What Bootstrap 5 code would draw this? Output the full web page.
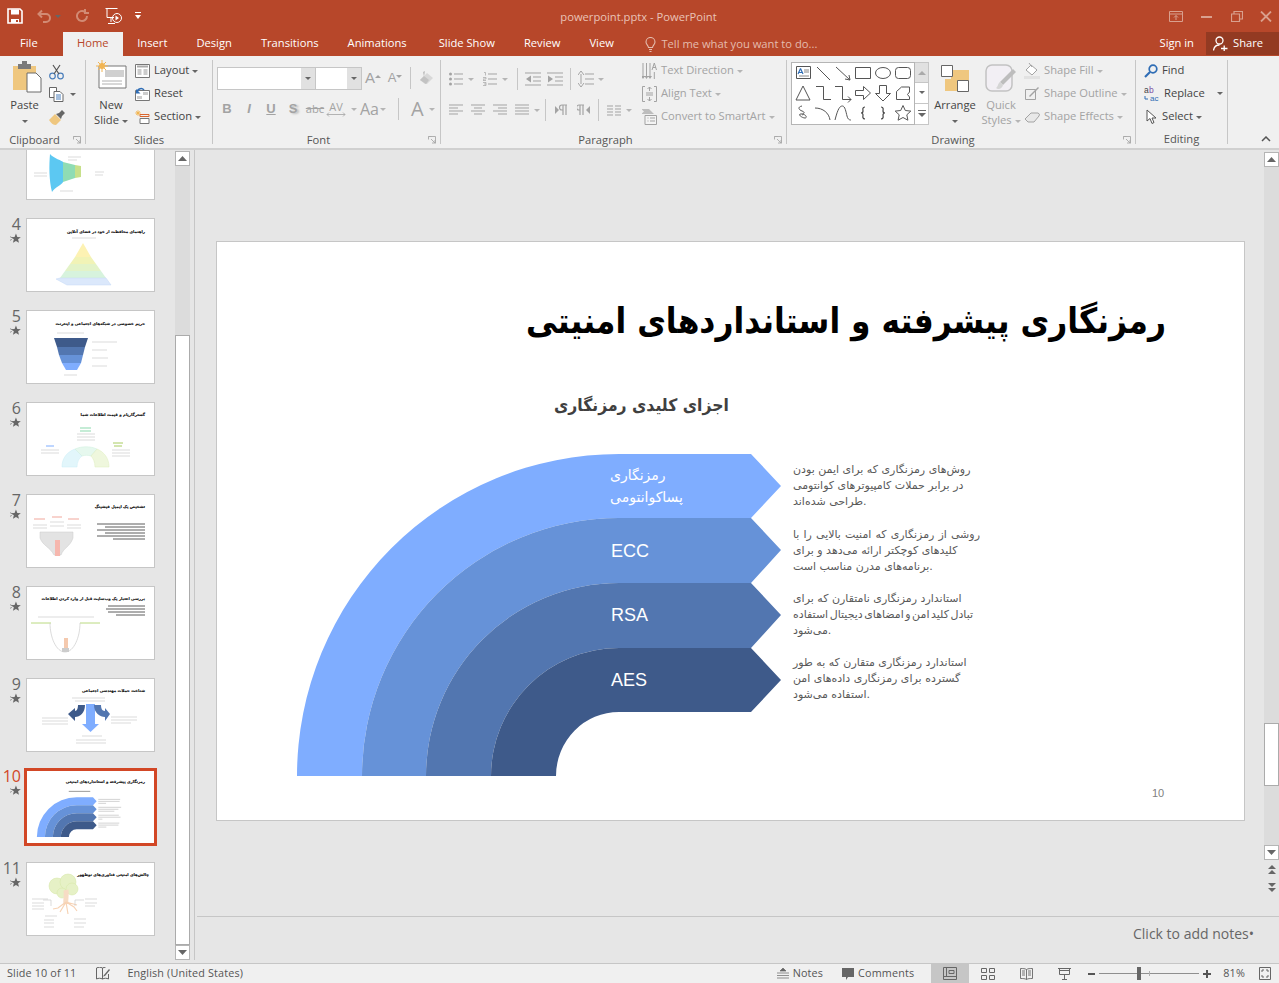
<!DOCTYPE html>
<html lang="en">
<head>
  <meta charset="UTF-8" />
  <title>powerpoint.pptx - PowerPoint</title>
  <link href="https://cdn.jsdelivr.net/npm/bootstrap@5.3.0/dist/css/bootstrap.min.css" rel="stylesheet"/>
  <style>
    html, body { height: 100%; overflow: hidden; }
    body { background: #e6e6e6; font-family: "Open Sans", "Liberation Sans", sans-serif; font-size: 11.2px; color: #444; }
    svg { display: block; flex: none; }

    /* title bar + tabs */
    .app-top { background: #b7472a; color: #fff; flex: none; }
    .title-row { height: 32px; position: relative; }
    .qat-save { margin: 0 14px 0 7px; }
    .qat-gap { margin-right: 7px; }
    .qat-more { margin-left: 12px; }
    .doc-name { color: #eac3b7; font-size: 11.2px; width: 100%; text-align: center; position: absolute; top: 9px; left: -1px; pointer-events: none; }
    .win-btns { margin-left: auto; gap: 17px; padding-right: 7px; }
    .tab-row { height: 24px; }
    .rb-tab { padding: 0 14.5px; line-height: 22px; height: 24px; white-space: nowrap; }
    .rb-tab-file { padding: 0 25px 0 20px; }
    .rb-tab-on { background: #f0f0f0; color: #b7472a; width: 60px; text-align: center; padding: 0; }
    .rb-tab-wide { padding-right: 17.5px; }
    .tell-me { color: #e5bcae; padding-left: 17px; gap: 5px; }
    .sign-in { margin-left: auto; padding-right: 10px; }
    .share-box { background: #933a22; width: 73px; height: 23px; gap: 5px; padding-left: 7px; }

    /* ribbon */
    .ribbon { background: #f0f0f0; height: 94px; border-bottom: 2px solid #d0d0d0; padding-top: 4px; flex: none; }
    .rb-group { height: 84px; border-right: 1px solid #c6c6c6; flex: none; position: relative; }
    .rb-body { height: 74px; }
    .rb-body > * { flex: none; }
    .rb-label { line-height: 12px; height: 12px; text-align: center; color: #555; font-size: 11.2px; }
    .lbl-pad { padding-right: 16px; }
    .g-clip { width: 86px; } .g-slides { width: 127px; } .g-font { width: 228px; }
    .g-para { width: 346px; } .g-draw { width: 349px; } .g-edit { width: 92px; }
    .launch { position: absolute; right: 4px; bottom: 0; }
    .big-ic { height: 37px; }
    .big-tx { line-height: 15px; text-align: center; white-space: nowrap; }
    .sm-row { height: 23px; white-space: nowrap; gap: 4px; }
    .sm-row:first-child { margin-top: -1px; }
    .tri { display: inline-block; border: 3px solid transparent; border-top: 3px solid #666; border-bottom: 0; vertical-align: middle; margin-left: 3px; }
    .dim { color: #a3a3a3; }
    .dim .tri { border-top-color: #b5b5b5; }
    .clip-big { width: 35px; margin: 0 7px 0 7px; }
    .clip-ic { margin-left: 4px; }
    .clip-sm { height: 23px; gap: 6px; }
    .slide-big { width: 42px; margin: 0 3px 0 4px; }
    .rb-sep { width: 1px; height: 22px; background: #c6c6c6; margin: 0 4px; flex: none; }
    .tb { width: 22px; height: 22px; flex: none; }
    .tb-c { width: 34px; height: 22px; flex: none; padding-right: 1px; gap: 1px; }
    .font-top { padding: 7px 0 0 4px; height: 38px; gap: 0; }
    .font-name { width: 99px; height: 23px; border: 1px solid #c6c6c6; display: flex; }
    .font-size { width: 46px; height: 23px; border: 1px solid #c6c6c6; border-left: 0; display: flex; }
    .fld { flex: 1; background: #fff; }
    .fld-dd { width: 14px; background: #e1e1e1; }
    .font-bot { padding-left: 3px; }
    .btn-tx { font-family: "Liberation Sans", sans-serif; font-weight: 700; font-size: 13px; color: #a3a3a3; }
    .btn-grow { font-size: 15px; font-weight: 400; }
    .btn-shadow { text-shadow: 2px 1px 2px #bbb; }
    .av-stack { line-height: 10px; font-size: 11px; text-align: center; }
    .para-left { width: 201px; padding: 4px 0 0 4px; }
    .para-row { height: 30px; }
    .para-row2 { height: 24px; margin-top: 4px; }
    .draw-box { width: 124px; height: 63px; background: #fff; border: 1px solid #b5b5b5; margin: 2px 0 0 4px; display: grid; grid-template-columns: repeat(6, 20px); grid-auto-rows: 20px; padding: 0 1px; }
    .draw-scroll { width: 14px; height: 63px; margin-top: 2px; border: 1px solid #c6c6c6; border-left: 0; background: #fff; }
    .draw-scroll div { height: 20.3px; border-bottom: 1px solid #c6c6c6; }
    .draw-scroll div:first-child { background: #e1e1e1; }
    .draw-scroll div:last-child { border-bottom: 0; }
    .arr-big { width: 46px; margin-left: 3px; }
    .qs-big { width: 46px; }
    .edit-col { padding-left: 8px; }
    .collapse-up { margin: 76px 0 0 auto; padding-right: 8px; }

    /* panes */
    .work { height: 813px; flex: none; }
    .thumb-pane { width: 195px; border-right: 1px solid #c6c6c6; height: 810px; overflow: hidden; flex: none; }
    .thumb-list { width: 175px; height: 810px; overflow: hidden; padding-top: 0; }
    .thumb-row { height: 92px; margin: 0; }
    .thumb-list > .thumb-row:first-child { margin-top: -24px; }
    .thumb-meta { width: 26px; padding-right: 5px; text-align: right; font-size: 16px; line-height: 12px; color: #666; flex: none; }
    .thumb-star { margin: 3px 0 0 10px; }
    .thumb-box { width: 129px; height: 74px; background: #fff; border: 1px solid #c6c6c6; flex: none; }
    .thumb-cur .thumb-box { border-color: #d24726; box-shadow: 0 0 0 2px #d24726; }
    .thumb-cur .thumb-meta { color: #d24726; }
    .thumb-tl { font-family: "DejaVu Sans", sans-serif; font-weight: 700; font-size: 3.9px; fill: #111; stroke: #111; stroke-width: .15; text-anchor: end; }
    .thumb-tl-big { font-size: 31.500px; stroke-width: 1.200; }
    .thumb-row:not(.thumb-cur) path[stroke="#ccc"] { stroke-width: .7; }
    .vscroll { width: 15px; background: #dcdcdc; flex: none; }
    .vs-left { height: 809px; margin-top: 1px; }
    .vs-btn { height: 15px; background: #fff; border: 1px solid #b5b5b5; flex: none; }
    .vs-fill { flex: 1; }
    .vs-thumb { background: #fff; border: 1px solid #ababab; flex: none; }
    .vs-thumb-l { height: 610px; }
    .vs-gap-l { height: 169px; }
    .vs-right { height: 708px; margin-top: 2px; }
    .vs-gap-r { height: 556px; }
    .vs-thumb-r { height: 63px; }
    .edit-pane { min-width: 0; }
    .edit-stage { height: 766px; flex: none; }
    .slide-wrap { flex: 1; padding: 91px 0 0 21px; }
    .slide-canvas { width: 1029px; height: 580px; background: #fff; border: 1px solid #c6c6c6; position: relative; }
    .page-nav { width: 15px; gap: 8px; padding-top: 5px; flex: none; }
    .rsb { width: 15px; flex: none; }
    .notes-pane { height: 46px; margin-left: 2px; border-top: 1px solid #c6c6c6; text-align: right; padding: 6px 25px 0 0; font-size: 14px; color: #666; flex: none; }

    /* slide contents, free canvas */
    .sl-art { position: absolute; left: 0; top: 1px; }
    .sl-fa { position: absolute; font-family: "DejaVu Sans", sans-serif; white-space: nowrap; line-height: 1; }
    .sl-title { right: 78px; top: 62px; font-size: 35px; font-weight: 700; color: #000; transform: scaleX(.895); transform-origin: right center; }
    .sl-sub { left: 337px; top: 155px; font-size: 17px; font-weight: 700; color: #404040; transform: scaleX(.92); transform-origin: left center; }
    .sl-band { color: #fff; font-size: 14px; left: 393px; line-height: 22px; }
    .sl-lat { position: absolute; left: 394px; color: #fff; font: 18px "Liberation Sans", sans-serif; line-height: 20px; }
    .sl-note { left: 576px; font-size: 11px; line-height: 16px; color: #595959; }
    .sl-tight { word-spacing: -2px; }
    .sl-loose { word-spacing: .6px; }
    .sl-no { position: absolute; left: 935px; top: 545px; color: #808080; font: 11px "Liberation Sans", sans-serif; }

    /* status bar */
    .status-bar { height: 20px; background: #f0f0f0; border-top: 1px solid #c6c6c6; flex: none; letter-spacing: .15px; font-size: 10.800px; color: #555; white-space: nowrap; }
    .st-left { padding-left: 7px; }
    .st-lang { margin-left: 16px; }
    .st-note-ic { margin-left: 20px; }
    .st-right { margin-left: auto; }
    .st-item { gap: 4px; margin-right: 19px; }
    .st-view { width: 38px; height: 20px; }
    .st-view-on { background: #c6c6c6; margin-left: -2px; }
    .st-view-end { margin-right: 5px; }
    .zoom-bar { width: 100px; height: 1px; background: #8f8f8f; position: relative; margin: 0 4px; }
    .zoom-knob { position: absolute; left: 38px; top: -6px; width: 4px; height: 13px; background: #666; }
    .zoom-tick { position: absolute; left: 50px; top: -2px; width: 1px; height: 5px; background: #b0b0b0; }
    .zoom-pct { margin: 0 14px 0 12px; }
  </style>
</head>
<body class="d-flex flex-column">

  <svg width="0" height="0" class="position-absolute">
    <symbol id="star" viewBox="0 0 12 12"><path d="M6.500 .5l1.500 3.800 3.800.2-3 2.400 1 3.800-3.300-2.100-3.300 2.100 1-3.800-3-2.400 3.800-.2z" fill="#666"/><path d="M0 4l3 1.500M0 8l2-1" stroke="#666" stroke-width=".7"/></symbol>
    <symbol id="launcher" viewBox="0 0 8 8"><path d="M.5 .5h7v7M.5 .5v3M.5 .5h3M3 3l4 4M7 4v3H4" fill="none" stroke="#a8a8a8" stroke-width=".9"/></symbol>
    <g id="art">
      <path fill="#7fadff" d="M80 533A322 322 0 0 1 402 211H534L564 243L534 275H402A257 258 0 0 0 145 533Z"/>
      <path fill="#6692d8" d="M145 533A257 258 0 0 1 402 275H534L564 307L534 340H402A193 193 0 0 0 209 533Z"/>
      <path fill="#5276b0" d="M209 533A193 193 0 0 1 402 340H534L564 372L534 405H402A128 128 0 0 0 274 533Z"/>
      <path fill="#3e5a8a" d="M274 533A128 128 0 0 1 402 405H534L564 437L534 469H402A63 64 0 0 0 339 533Z"/>
    </g>
  </svg>

  <!-- title bar and tabs -->
  <header class="app-top">
    <div class="title-row d-flex align-items-center">
      <svg class="qat-save" width="16" height="16" viewBox="0 0 16 16"><path d="M1 1h12l2 2v12H1z" fill="none" stroke="#fff" stroke-width="1.600"/><path d="M4 1.500h8v5H4zM4 11h8v4H4z" fill="#fff"/><path d="M9 12h2v2H9z" fill="#b7472a"/></svg>
      <svg width="15" height="14" viewBox="0 0 15 14"><path d="M5 1.500L1.500 5 5 8.500M2 5h7a4 4 0 0 1 0 8H6" fill="none" stroke="#d28b74" stroke-width="2"/></svg>
      <span class="tri qat-gap"></span>
      <svg class="ms-2 qat-gap" width="14" height="14" viewBox="0 0 14 14"><path d="M11 7a5 5 0 1 1-2-4M9 0v4H13" fill="none" stroke="#d28b74" stroke-width="2"/></svg>
      <svg class="ms-2" width="18" height="18" viewBox="0 0 18 18"><path d="M.5 1.500h12M2 1.500v9h7M6 11v4M3 16.500h7" fill="none" stroke="#fff"/><circle cx="12" cy="11" r="4.500" fill="none" stroke="#fff"/><path d="M10.500 8.500v5l3.500-2.500z" fill="#fff"/></svg>
      <svg class="qat-more" width="6" height="8" viewBox="0 0 6 8"><path d="M0 0h6v1H0zM0 3h6L3 7z" fill="#fff"/></svg>
      <div class="doc-name">powerpoint.pptx - PowerPoint</div>
      <div class="win-btns d-flex align-items-center">
        <svg width="14" height="11" viewBox="0 0 14 11"><path d="M.5 .5h13v10H.5zM.5 3h13M7 9V4.500M5 6.500l2-2 2 2" fill="none" stroke="#d9a08e"/></svg>
        <svg width="14" height="11" viewBox="0 0 14 11"><path d="M1 6h11" stroke="#d9a08e" stroke-width="2"/></svg>
        <svg width="12" height="11" viewBox="0 0 12 11"><path d="M.5 3h8v7.500h-8zM3 3V.5h8.500V8H8.500" fill="none" stroke="#d9a08e" stroke-width="1.200"/></svg>
        <svg width="12" height="11" viewBox="0 0 12 11"><path d="M1 .5l10 10M11 .5l-10 10" stroke="#d9a08e" stroke-width="1.800"/></svg>
      </div>
    </div>
    <div class="tab-row d-flex">
      <div class="rb-tab rb-tab-file">File</div>
      <div class="rb-tab rb-tab-on">Home</div>
      <div class="rb-tab">Insert</div>
      <div class="rb-tab">Design</div>
      <div class="rb-tab">Transitions</div>
      <div class="rb-tab rb-tab-wide">Animations</div>
      <div class="rb-tab">Slide Show</div>
      <div class="rb-tab">Review</div>
      <div class="rb-tab">View</div>
      <div class="tell-me d-flex align-items-center">
        <svg width="11" height="15" viewBox="0 0 11 15"><path d="M3.500 10.500C3 8 1 7.500 1 5a4.500 4.500 0 0 1 9 0c0 2.500-2 3-2.500 5.500zM4 12.500h3M4.500 14.500h2" fill="none" stroke="#e5bcae" stroke-width="1.100"/></svg>
        <span>Tell me what you want to do...</span>
      </div>
      <div class="sign-in rb-tab px-0 pe-2">Sign in</div>
      <div class="share-box d-flex align-items-center ms-1">
        <svg width="15" height="15" viewBox="0 0 15 15"><circle cx="6.500" cy="4.500" r="3.500" fill="none" stroke="#fff" stroke-width="1.300"/><path d="M.5 14.500C1 10.500 3.500 9 6.500 9M8 12.500h6.500M11.200 9.500v5.500" fill="none" stroke="#fff" stroke-width="1.300"/></svg>
        <span>Share</span>
      </div>
    </div>
  </header>

  <!-- ribbon -->
  <section class="ribbon d-flex">
    <div class="rb-group g-clip">
      <div class="rb-body d-flex">
        <div class="clip-big d-flex flex-column align-items-center">
          <div class="big-ic">
            <svg class="clip-ic" width="30" height="33" viewBox="0 0 30 33"><path d="M1 6h23v24H1z" fill="#efc77f"/><path d="M6 4h13v5H6z" fill="#7a7a7a"/><path d="M10 1h5v4h-5z" fill="#7a7a7a"/><path d="M15 13h9l5 5v14H15z" fill="#fff" stroke="#6a6a6a"/></svg>
          </div>
          <div class="big-tx">Paste</div>
          <div class="big-tx"><span class="tri ms-0"></span></div>
        </div>
        <div>
          <div class="clip-sm d-flex align-items-center">
            <svg width="15" height="16" viewBox="0 0 15 16"><circle cx="3.500" cy="12" r="2.800" fill="none" stroke="#4a7ebb" stroke-width="1.200"/><circle cx="11.500" cy="12" r="2.800" fill="none" stroke="#4a7ebb" stroke-width="1.200"/><path d="M5 10L11 1M10 10L4 1" stroke="#555" stroke-width="1.200"/></svg>
          </div>
          <div class="clip-sm d-flex align-items-center">
            <svg width="15" height="15" viewBox="0 0 15 15"><path d="M.5 .5h7v10h-7z" fill="#fff" stroke="#666"/><path d="M5 4.500h6l3 3v7H5z" fill="#fff" stroke="#666"/><path d="M7 8h5M7 10h5M7 12h5" stroke="#4a7ebb"/></svg>
            <span class="tri ms-0"></span>
          </div>
          <div class="clip-sm d-flex align-items-center">
            <svg width="16" height="16" viewBox="0 0 16 16"><path d="M0 10l6-6 6 6-5 5C4 15 2 13 0 10z" fill="#efc77f"/><path d="M7 4l3-1 3-3 3 3-3 3-1 3z" fill="#666"/></svg>
          </div>
        </div>
      </div>
      <div class="rb-label lbl-pad">Clipboard</div>
      <svg class="launch" width="8" height="8"><use href="#launcher"/></svg>
    </div>

    <div class="rb-group g-slides">
      <div class="rb-body d-flex">
        <div class="slide-big d-flex flex-column align-items-center">
          <div class="big-ic">
            <svg width="32" height="30" viewBox="0 0 32 30"><path d="M4 6h27v22H4z" fill="#fff" stroke="#777"/><path d="M10 10h19v7H10z" fill="#d0d0d0"/><path d="M7 21h20M7 24h20" stroke="#b0b0b0"/><circle cx="7" cy="6" r="3" fill="#f2b552"/><path d="M7 0v12M1 6h12M3 2l8 8M11 2l-8 8" stroke="#f2b552"/></svg>
          </div>
          <div class="big-tx">New</div>
          <div class="big-tx">Slide<span class="tri"></span></div>
        </div>
        <div>
          <div class="sm-row d-flex align-items-center"><svg width="15" height="14" viewBox="0 0 15 14"><path d="M.5 .5h14v13H.5z" fill="#fff" stroke="#777"/><path d="M2 2.500h11" stroke="#aaa" stroke-width="2"/><path d="M2.500 5h4v6h-4z" fill="#ccc"/><path d="M8.500 6h4M8.500 8h4M8.500 10h4" stroke="#999"/></svg><span>Layout<span class="tri"></span></span></div>
          <div class="sm-row d-flex align-items-center"><svg width="15" height="14" viewBox="0 0 15 14"><path d="M.5 3.500h14v10H.5z" fill="#fff" stroke="#777"/><path d="M8 5h5v3H8zM2 9h5v3H2z" fill="#ccc"/><path d="M2 6A4 4 0 0 1 9 3" fill="none" stroke="#2f6db5" stroke-width="1.500"/><path d="M1 2v4.500h4.500z" fill="#2f6db5"/></svg><span>Reset</span></div>
          <div class="sm-row d-flex align-items-center"><svg width="15" height="14" viewBox="0 0 15 14"><path d="M5 4.500h9v2H5z" fill="none" stroke="#d9662f"/><path d="M5 8.500h9v5H5z" fill="#fff" stroke="#777"/><circle cx="3" cy="3" r="1.500" fill="#f2b552"/><path d="M3 0v6M0 3h6M1 1l4 4M5 1l-4 4" stroke="#f2b552" stroke-width=".7"/></svg><span>Section<span class="tri"></span></span></div>
        </div>
      </div>
      <div class="rb-label">Slides</div>
    </div>

    <div class="rb-group g-font">
      <div class="rb-body">
        <div class="font-top d-flex">
          <div class="font-name"><div class="fld"></div><div class="fld-dd d-flex align-items-center justify-content-center"><span class="tri ms-0"></span></div></div>
          <div class="font-size"><div class="fld"></div><div class="fld-dd d-flex align-items-center justify-content-center"><span class="tri ms-0"></span></div></div>
          <div class="tb d-flex align-items-center justify-content-center btn-tx btn-grow">A<svg width="6" height="8" viewBox="0 0 6 8"><path d="M3 1l3 3H0z" fill="#a3a3a3"/></svg></div>
          <div class="tb d-flex align-items-center justify-content-center btn-tx fw-normal">A<svg width="6" height="8" viewBox="0 0 6 8"><path d="M0 1h6L3 4z" fill="#a3a3a3"/></svg></div>
          <div class="rb-sep"></div>
          <div class="tb d-flex align-items-center justify-content-center">
            <svg width="15" height="15" viewBox="0 0 15 15"><path d="M4 1l2-1-1 6z" fill="#bdbdbd"/><path d="M6 13L1 9l7-7 6 5-6 6z" fill="#d8d8d8"/><path d="M1 9l4-4 5 4-3 4z" fill="#c2c2c2"/></svg>
          </div>
        </div>
        <div class="font-bot d-flex align-items-center">
          <div class="tb d-flex align-items-center justify-content-center btn-tx">B</div>
          <div class="tb d-flex align-items-center justify-content-center btn-tx fst-italic">I</div>
          <div class="tb d-flex align-items-center justify-content-center btn-tx text-decoration-underline">U</div>
          <div class="tb d-flex align-items-center justify-content-center btn-tx btn-shadow">S</div>
          <div class="tb d-flex align-items-center justify-content-center dim text-decoration-line-through">abc</div>
          <div class="tb-c d-flex align-items-center dim"><div class="ms-0 av-stack">AV<svg width="20" height="5" viewBox="0 0 20 5"><path d="M1 2.500h18M3 .5l-2 2 2 2M17 .5l2 2-2 2" fill="none" stroke="#a3a3a3" stroke-width=".8"/></svg></div><span class="tri ms-1"></span></div>
          <div class="tb-c d-flex align-items-center dim"><span class="fs-6">Aa</span><span class="tri ms-0"></span></div>
          <div class="rb-sep"></div>
          <div class="tb-c d-flex align-items-center dim ps-2"><span class="fs-5">A</span><span class="tri ms-1"></span></div>
        </div>
      </div>
      <div class="rb-label lbl-pad">Font</div>
      <svg class="launch" width="8" height="8"><use href="#launcher"/></svg>
    </div>

    <div class="rb-group g-para">
      <div class="rb-body d-flex">
        <div class="para-left dim">
          <div class="para-row d-flex align-items-center">
            <div class="tb-c d-flex align-items-center"><div class="tb d-flex align-items-center justify-content-center"><svg width="14" height="14" viewBox="0 0 14 14"><path d="M5 2h9M5 7h9M5 12h9" stroke="#a3a3a3"/><circle cx="1.500" cy="2" r="1.500" fill="#a3a3a3"/><circle cx="1.500" cy="7" r="1.500" fill="#a3a3a3"/><circle cx="1.500" cy="12" r="1.500" fill="#a3a3a3"/></svg></div><span class="tri ms-0"></span></div>
            <div class="tb-c d-flex align-items-center"><div class="tb d-flex align-items-center justify-content-center"><svg width="14" height="14" viewBox="0 0 14 14"><path d="M5 2h9M5 7h9M5 12h9" stroke="#a3a3a3"/><path d="M1 .5h1.500v3M0 5.500h3v1.500H0v1.500h3M0 10.500h3v3H0M1 12h2" fill="none" stroke="#a3a3a3" stroke-width=".7"/></svg></div><span class="tri ms-0"></span></div>
            <div class="rb-sep ms-1 me-1"></div>
            <div class="tb d-flex align-items-center justify-content-center"><svg width="16" height="14" viewBox="0 0 16 14"><path d="M0 1h16M8 5h8M8 9h8M0 13h16" stroke="#a3a3a3"/><path d="M6 3.500v7L1 7z" fill="#a3a3a3"/></svg></div>
            <div class="tb d-flex align-items-center justify-content-center"><svg width="16" height="14" viewBox="0 0 16 14"><path d="M0 1h16M8 5h8M8 9h8M0 13h16" stroke="#a3a3a3"/><path d="M1 3.500v7L6 7z" fill="#a3a3a3"/></svg></div>
            <div class="rb-sep"></div>
            <div class="tb-c d-flex align-items-center"><div class="tb d-flex align-items-center justify-content-center"><svg width="16" height="16" viewBox="0 0 16 16"><path d="M7 3h9M7 8h9M7 13h9" stroke="#a3a3a3"/><path d="M3 3v10M0 4l3-4 3 4M0 12l3 4 3-4" fill="none" stroke="#a3a3a3"/></svg></div><span class="tri ms-0"></span></div>
          </div>
          <div class="para-row2 d-flex align-items-center">
            <div class="tb d-flex align-items-center justify-content-center"><svg width="14" height="12" viewBox="0 0 14 12"><path d="M0 1h14M0 4h9M0 7h14M0 10h9" stroke="#a3a3a3"/></svg></div>
            <div class="tb d-flex align-items-center justify-content-center"><svg width="14" height="12" viewBox="0 0 14 12"><path d="M0 1h14M3 4h8M0 7h14M3 10h8" stroke="#a3a3a3"/></svg></div>
            <div class="tb d-flex align-items-center justify-content-center"><svg width="14" height="12" viewBox="0 0 14 12"><path d="M0 1h14M5 4h9M0 7h14M5 10h9" stroke="#a3a3a3"/></svg></div>
            <div class="tb-c d-flex align-items-center"><div class="tb d-flex align-items-center justify-content-center"><svg width="14" height="12" viewBox="0 0 14 12"><path d="M0 1h14M0 4h14M0 7h14M0 10h14" stroke="#a3a3a3"/></svg></div><span class="tri ms-0"></span></div>
            <div class="rb-sep ms-0"></div>
            <div class="tb d-flex align-items-center justify-content-center"><svg width="13" height="12" viewBox="0 0 13 12"><path d="M0 2v8l4-4z" fill="#a3a3a3"/><path d="M8 1v10M11 1v10M8 1H7a2.500 2.500 0 0 0 0 5h1M8 1h4" fill="none" stroke="#a3a3a3" stroke-width="1.200"/></svg></div>
            <div class="tb d-flex align-items-center justify-content-center"><svg width="13" height="12" viewBox="0 0 13 12"><path d="M13 2v8l-4-4z" fill="#a3a3a3"/><path d="M3 1v10M6 1v10M3 1H2a2.500 2.500 0 0 0 0 5h1M3 1h4" fill="none" stroke="#a3a3a3" stroke-width="1.200"/></svg></div>
            <div class="rb-sep ms-1"></div>
            <div class="tb-c d-flex align-items-center"><div class="tb d-flex align-items-center justify-content-center"><svg width="14" height="11" viewBox="0 0 14 11"><path d="M0 1h6M8 1h6M0 4h6M8 4h6M0 7h6M8 7h6M0 10h6M8 10h6" stroke="#a3a3a3"/></svg></div><span class="tri ms-0"></span></div>
          </div>
        </div>
        <div class="dim">
          <div class="sm-row d-flex align-items-center"><svg width="15" height="18" viewBox="0 0 15 18"><path d="M1 1v14M4.500 1v14M8 1v14" stroke="#a3a3a3"/><path d="M-1 14l2 3 2-3M2.500 14l2 3 2-3M6 14l2 3 2-3" fill="#a3a3a3"/><path d="M10 8l2.300-7L14.500 8M11 5.500h3M12.300 10v7" fill="none" stroke="#a3a3a3"/></svg><span>Text Direction<span class="tri"></span></span></div>
          <div class="sm-row d-flex align-items-center"><svg width="15" height="16" viewBox="0 0 15 16"><path d="M3 .5H.5v15H3M12 .5h2.500v15H12" fill="none" stroke="#a3a3a3"/><path d="M4 7h7M4 9h7M7.500 1v4M7.500 11v4M5.500 3l2-2 2 2M5.500 13l2 2 2-2" fill="none" stroke="#a3a3a3"/></svg><span>Align Text<span class="tri"></span></span></div>
          <div class="sm-row d-flex align-items-center"><svg width="15" height="16" viewBox="0 0 15 16"><path d="M-1 0h8l5 5H-1l3-2.500z" fill="#bdbdbd"/><path d="M3 6.500h11.500v9H3zM5.500 9h1M8 9h5M5.500 12h1M8 12h5" fill="#f4f4f4" stroke="#a3a3a3"/></svg><span>Convert to SmartArt<span class="tri"></span></span></div>
        </div>
      </div>
      <div class="rb-label lbl-pad">Paragraph</div>
      <svg class="launch" width="8" height="8"><use href="#launcher"/></svg>
    </div>

    <div class="rb-group g-draw">
      <div class="rb-body d-flex">
        <div class="draw-box">
          <svg width="20" height="20" viewBox="0 0 20 20"><path d="M3.500 3.500h14v12h-14z" fill="#fff" stroke="#555"/><path d="M7.500 5.500L5 11M7.500 5.500L10 11M6 9.500h3" fill="none" stroke="#2f6db5" stroke-width="1.200"/><path d="M11 7h5M11 9h5M6 13h10" stroke="#888"/></svg>
          <svg width="20" height="20" viewBox="0 0 20 20"><path d="M4 4l13 13" stroke="#555"/></svg>
          <svg width="20" height="20" viewBox="0 0 20 20"><path d="M3 4l14 13M17 17l-1-5M17 17l-5-1" fill="none" stroke="#555"/></svg>
          <svg width="20" height="20" viewBox="0 0 20 20"><path d="M2.500 4.500h15v11h-15z" fill="none" stroke="#555"/></svg>
          <svg width="20" height="20" viewBox="0 0 20 20"><ellipse cx="10" cy="10" rx="7.500" ry="5.500" fill="none" stroke="#555"/></svg>
          <svg width="20" height="20" viewBox="0 0 20 20"><rect x="2.500" y="4.500" width="15" height="11" rx="3" fill="none" stroke="#555"/></svg>
          <svg width="20" height="20" viewBox="0 0 20 20"><path d="M10 3l7 14H3z" fill="none" stroke="#555"/></svg>
          <svg width="20" height="20" viewBox="0 0 20 20"><path d="M3 3.500h7.500v13H18" fill="none" stroke="#555"/></svg>
          <svg width="20" height="20" viewBox="0 0 20 20"><path d="M2 3.500h7.500v13H18M15 13.500l3 3-3 3" fill="none" stroke="#555"/></svg>
          <svg width="20" height="20" viewBox="0 0 20 20"><path d="M2.500 7.500h8v-4l7 6.500-7 6.500v-4h-8z" fill="none" stroke="#555"/></svg>
          <svg width="20" height="20" viewBox="0 0 20 20"><path d="M6.500 2.500h7v8h4L10 18l-7.500-7.500h4z" fill="none" stroke="#555"/></svg>
          <svg width="20" height="20" viewBox="0 0 20 20"><path d="M3.500 16.500v-8l5-4.500h8v5l-2 2.500 2 2.500v2.500z" fill="none" stroke="#555"/></svg>
          <svg width="20" height="20" viewBox="0 0 20 20"><path d="M9 3C4 4 6 7 9 8s3 3-1 3 1 4 4 4 0-5-3-3" fill="none" stroke="#555"/></svg>
          <svg width="20" height="20" viewBox="0 0 20 20"><path d="M2 5c8 0 14 5 15 12" fill="none" stroke="#555"/></svg>
          <svg width="20" height="20" viewBox="0 0 20 20"><path d="M2 17C5 5 7 3 9.500 3S13 9 14 13s3 4 4 4" fill="none" stroke="#555"/></svg>
          <svg width="20" height="20" viewBox="0 0 20 20"><path d="M12 4c-3 0-2 3-2 4s-1 2-2 2c1 0 2 1 2 2s-1 4 2 4" fill="none" stroke="#444" stroke-width="1.200"/></svg>
          <svg width="20" height="20" viewBox="0 0 20 20"><path d="M8 4c3 0 2 3 2 4s1 2 2 2c-1 0-2 1-2 2s1 4-2 4" fill="none" stroke="#444" stroke-width="1.200"/></svg>
          <svg width="20" height="20" viewBox="0 0 20 20"><path d="M10 2.500l2.300 5 5.500.6-4 3.700 1.100 5.400-4.900-2.700-4.900 2.700 1.100-5.400-4-3.700 5.500-.6z" fill="none" stroke="#555"/></svg>
        </div>
        <div class="draw-scroll">
          <div class="d-flex align-items-center justify-content-center"><svg width="8" height="4" viewBox="0 0 8 4"><path d="M4 0l4 4H0z" fill="#aaa"/></svg></div>
          <div class="d-flex align-items-center justify-content-center"><span class="tri ms-0"></span></div>
          <div class="d-flex align-items-center justify-content-center"><svg width="8" height="7" viewBox="0 0 8 7"><path d="M0 0h8v1H0zM0 3h8L4 7z" fill="#666"/></svg></div>
        </div>
        <div class="arr-big d-flex flex-column align-items-center">
          <div class="big-ic pt-1">
            <svg width="28" height="28" viewBox="0 0 28 28"><path d="M10 6h18v20H10zM4 15h18v12H4z" fill="#efc77f"/><path d="M.5 1.500h11v11H.5zM16.500 16.500h11v11h-11z" fill="#fff" stroke="#666"/></svg>
          </div>
          <div class="big-tx">Arrange</div>
          <div class="big-tx"><span class="tri ms-0"></span></div>
        </div>
        <div class="qs-big d-flex flex-column align-items-center dim">
          <div class="big-ic pt-1">
            <svg width="32" height="32" viewBox="0 0 32 32"><rect x="1" y="1" width="26" height="26" rx="6" fill="#f2eff4" stroke="#c2c2c2" stroke-width="1.500"/><path d="M31 8L18 21l-3-3L28 5z" fill="#bdbdbd"/><path d="M18 21c-1 4-5 5-7 3 2-1 2-5 4-6z" fill="#d5d5d5"/></svg>
          </div>
          <div class="big-tx">Quick</div>
          <div class="big-tx">Styles<span class="tri"></span></div>
        </div>
        <div class="dim">
          <div class="sm-row d-flex align-items-center"><svg width="16" height="16" viewBox="0 0 16 16"><path d="M0 13h16v3H0z" fill="#e2e2e2"/><path d="M2 7l5-5 6 5-5 5z" fill="#fff" stroke="#a3a3a3"/><path d="M5 0l3 4" stroke="#a3a3a3"/></svg><span>Shape Fill<span class="tri"></span></span></div>
          <div class="sm-row d-flex align-items-center"><svg width="16" height="16" viewBox="0 0 16 16"><path d="M1.500 3.500h10v10h-10z" fill="none" stroke="#a3a3a3"/><path d="M6 11l9-9-1-1-9 9z" fill="#a3a3a3"/></svg><span>Shape Outline<span class="tri"></span></span></div>
          <div class="sm-row d-flex align-items-center"><svg width="16" height="16" viewBox="0 0 16 16"><path d="M1 10l6-6h7a2 2 0 0 1 1 3l-5 6H4z" fill="#e8e8e8" stroke="#a3a3a3"/></svg><span>Shape Effects<span class="tri"></span></span></div>
        </div>
      </div>
      <div class="rb-label lbl-pad">Drawing</div>
      <svg class="launch" width="8" height="8"><use href="#launcher"/></svg>
    </div>

    <div class="rb-group g-edit">
      <div class="rb-body edit-col">
        <div class="sm-row d-flex align-items-center"><svg width="14" height="14" viewBox="0 0 14 14"><circle cx="9" cy="5" r="3.800" fill="none" stroke="#2f6db5" stroke-width="1.700"/><path d="M6 8l-5 5" stroke="#2f6db5" stroke-width="2.200"/></svg><span>Find</span></div>
        <div class="sm-row d-flex align-items-center"><svg width="16" height="16" viewBox="0 0 16 16"><text x="0" y="7" font-size="8.500" fill="#444" font-family="Liberation Sans">a</text><text x="5" y="7" font-size="8.500" fill="#7c4fa3" font-family="Liberation Sans">b</text><text x="6" y="15" font-size="8" fill="#2f6db5" font-family="Liberation Sans">ac</text><path d="M1 10v3h3" fill="none" stroke="#2f6db5"/></svg><span>Replace</span><span class="tri ms-2"></span></div>
        <div class="sm-row d-flex align-items-center"><svg width="14" height="16" viewBox="0 0 14 16"><path d="M3 1v11l3-2.500 2 5 2-1-2-4.500h4z" fill="#fff" stroke="#555"/></svg><span>Select<span class="tri"></span></span></div>
      </div>
      <div class="rb-label">Editing</div>
    </div>

    <div class="collapse-up"><svg width="10" height="6" viewBox="0 0 10 6"><path d="M1 5l4-4 4 4" fill="none" stroke="#555" stroke-width="1.500"/></svg></div>
  </section>

  <!-- slide sorter + editor -->
  <main class="work d-flex">
    <div class="thumb-pane d-flex">
      <div class="thumb-list">
        <div class="thumb-row d-flex">
          <div class="thumb-meta"></div>
          <div class="thumb-box">
            <svg width="127" height="72" viewBox="27 127 127 72">
              <path d="M50 154c3 4 13 7 13 8v20c0 2-9 6-11 10-3-12-3-26-2-38z" fill="#5cc8f2"/>
              <path d="M63 162l12 3v13l-12 4z" fill="#8fdcb4"/>
              <path d="M75 165l6 1v11l-6 1z" fill="#c7e08a"/>
              <path d="M34 173h13M34 176h13M95 172h9M95 175h8M68 157h13M68 160h9M60 191h13" stroke="#ccc"/>
            </svg>
          </div>
        </div>
        <div class="thumb-row d-flex">
          <div class="thumb-meta">4<svg class="thumb-star" width="11" height="11"><use href="#star"/></svg></div>
          <div class="thumb-box">
            <svg width="127" height="72" viewBox="27 219 127 72">
              <text class="thumb-tl" x="145" y="233">راهنمای محافظت از خود در فضای آنلاین</text>
              <path d="M83 243l8 14H75z" fill="#fdf2b3"/><path d="M75 257h16l5 7H70z" fill="#f1f3b6"/>
              <path d="M70 264h26l5 7H65z" fill="#e3f3c8"/><path d="M65 271h36l5 7H60z" fill="#d7f3dd"/>
              <path d="M60 278h46l5 7H67l-11-6z" fill="#dbe8fb" stroke="#c5d9f6" stroke-width=".5"/>
              <path d="M72 238h24" stroke="#ccc"/>
            </svg>
          </div>
        </div>
        <div class="thumb-row d-flex">
          <div class="thumb-meta">5<svg class="thumb-star" width="11" height="11"><use href="#star"/></svg></div>
          <div class="thumb-box">
            <svg width="127" height="72" viewBox="27 311 127 72">
              <text class="thumb-tl" x="145" y="325">حریم خصوصی در شبکه‌های اجتماعی و اینترنت</text>
              <path d="M54 338h34l-3 9H57z" fill="#3e5a8a"/><path d="M57 347h28l-2 8H59z" fill="#5276b0"/>
              <path d="M59 355h24l-2 8H62z" fill="#6692d8"/><path d="M62 363h19l-4 7h-11z" fill="#7fadff"/>
              <path d="M92 342h25M92 350h15M92 358h16M92 366h15M57 333h27M64 375h13" stroke="#ccc"/>
            </svg>
          </div>
        </div>
        <div class="thumb-row d-flex">
          <div class="thumb-meta">6<svg class="thumb-star" width="11" height="11"><use href="#star"/></svg></div>
          <div class="thumb-box">
            <svg width="127" height="72" viewBox="27 403 127 72">
              <text class="thumb-tl" x="145" y="416">گسترگاریام و قیمت اطلاعات شما</text>
              <path d="M62 467c0-9 5-15 13-18l7 7c-3 2-5 6-5 11z" fill="#e2f6fb" stroke="#c9ecf5" stroke-width=".5"/>
              <path d="M75 449c7-3 15-3 22 0l-6 7c-3-1-6-1-9 0z" fill="#e6f8ee" stroke="#ccefdc" stroke-width=".5"/>
              <path d="M97 449c7 3 12 9 12 18H95c0-5-2-9-4-11z" fill="#eff7dd" stroke="#dcedbc" stroke-width=".5"/>
              <path d="M80 428h11M80 431h11" stroke="#8bd9ad"/><path d="M46 446h8" stroke="#7fadff"/><path d="M113 443h10M114 446h8" stroke="#a8cc60"/>
              <path d="M77 434h18M77 437h18M77 440h18M41 450h18M41 453h18M112 450h18M112 453h18M112 456h18" stroke="#ccc"/>
            </svg>
          </div>
        </div>
        <div class="thumb-row d-flex">
          <div class="thumb-meta">7<svg class="thumb-star" width="11" height="11"><use href="#star"/></svg></div>
          <div class="thumb-box">
            <svg width="127" height="72" viewBox="27 495 127 72">
              <text class="thumb-tl" x="145" y="508">تشخیص یک ایمیل فیشینگ</text>
              <path d="M40 532h33v6c-3 9-9 9-12 17h-7c-4-8-11-9-14-17z" fill="#e3e3e3" stroke="#c8c8c8" stroke-width=".5"/>
              <path d="M55 540h5v16h-5z" fill="#f6b7ae"/>
              <path d="M34 519h11M52 517h10M68 519h11" stroke="#f1a79c"/>
              <path d="M33 525h14M33 528h14M50 522h14M50 526h14M67 525h14M67 528h14" stroke="#ccc"/>
              <path d="M97 524h48M105 527h40M97 530h48M105 533h40M97 536h48M113 539h32" stroke="#333" stroke-width=".8"/>
            </svg>
          </div>
        </div>
        <div class="thumb-row d-flex">
          <div class="thumb-meta">8<svg class="thumb-star" width="11" height="11"><use href="#star"/></svg></div>
          <div class="thumb-box">
            <svg width="127" height="72" viewBox="27 587 127 72">
              <text class="thumb-tl" x="145" y="600">بررسی اعتبار یک وب‌سایت قبل از وارد کردن اطلاعات</text>
              <path d="M108 606h37M106 609h39M108 612h37M116 615h29" stroke="#333" stroke-width=".8"/>
              <path d="M38 617h56" stroke="#ccc"/>
              <path d="M31 623h20M80 623h20" stroke="#bada80"/>
              <path d="M50 623c0 14 6 29 15 29s15-15 15-29" fill="none" stroke="#ccc"/>
              <path d="M64 638h4v10h-4z" fill="#f4c9ae"/><path d="M62 648h7v4h-7z" fill="#ccc"/>
            </svg>
          </div>
        </div>
        <div class="thumb-row d-flex">
          <div class="thumb-meta">9<svg class="thumb-star" width="11" height="11"><use href="#star"/></svg></div>
          <div class="thumb-box">
            <svg width="127" height="72" viewBox="27 679 127 72">
              <text class="thumb-tl" x="145" y="692">شناخت حملات مهندسی اجتماعی</text>
              <path d="M86 704h9v20h4l-8.500 8-8.500-8h4z" fill="#7fadff"/>
              <path d="M85 705c0 8-5 12-10 12v4l-7-7 7-6v3c2 0 3-3 3-6z" fill="#3e5a8a"/>
              <path d="M94 705c0 8 6 12 11 12v4l5-7-5-6v3c-3 0-4-3-4-6z" fill="#5276b0"/>
              <path d="M72 698h33M75 701h30M82 736h20M76 740h30M76 743h30M42 718h26M42 721h26M42 724h26M111 717h26M111 720h26M111 723h20" stroke="#ccc"/>
            </svg>
          </div>
        </div>
        <div class="thumb-row d-flex thumb-cur">
          <div class="thumb-meta">10<svg class="thumb-star" width="11" height="11"><use href="#star"/></svg></div>
          <div class="thumb-box">
            <svg width="127" height="72" viewBox="0 0 1028 579">
              <text class="thumb-tl thumb-tl-big" x="955" y="93">رمزنگاری پیشرفته و استانداردهای امنیتی</text>
              <use href="#art"/>
              <path d="M338 163H512" stroke="#999" stroke-width="8"/>
              <path d="M577 228H754M577 244H750M577 260H640M577 292H762M577 308H740M577 324H707M577 356H743M577 372H757M577 388H610M577 420H747M577 436H740M577 452H642" stroke="#ccc" stroke-width="7"/>
            </svg>
          </div>
        </div>
        <div class="thumb-row d-flex">
          <div class="thumb-meta">11<svg class="thumb-star" width="11" height="11"><use href="#star"/></svg></div>
          <div class="thumb-box">
            <svg width="127" height="72" viewBox="27 863 127 72">
              <text class="thumb-tl" x="149" y="876">چالش‌های امنیتی فناوری‌های نوظهور</text>
              <circle cx="57" cy="886" r="8" fill="#e6f1c6" stroke="#d5e6a4" stroke-width=".5"/>
              <circle cx="68" cy="882" r="8" fill="#e6f1c6" stroke="#d5e6a4" stroke-width=".5"/>
              <circle cx="72" cy="889" r="6" fill="#e6f1c6" stroke="#d5e6a4" stroke-width=".5"/>
              <circle cx="62" cy="893" r="5" fill="#e6f1c6" stroke="#d5e6a4" stroke-width=".5"/>
              <path d="M66 890c1 6-1 10 0 14" stroke="#f7dcc4" stroke-width="5" fill="none"/>
              <path d="M66 902l-8 6-5 1M66 902l-6 10M66 902l2 12M66 902l8 5 3 4M66 902l11 3" stroke="#f7d3b5" stroke-width="1.200" fill="none"/>
              <path d="M43 900h8v6M75 906v-6h9M32 899h16M32 903h12M32 906h12M32 909h12M85 899h12M85 903h12M85 906h10M45 916h12M44 920h10M44 923h10M44 927h10M74 919h12M74 923h12M74 927h10" stroke="#ccc" fill="none"/>
            </svg>
          </div>
        </div>
      </div>
      <div class="vscroll vs-left d-flex flex-column">
        <div class="vs-btn d-flex align-items-center justify-content-center"><svg width="9" height="5" viewBox="0 0 9 5"><path d="M4.500 0l4.500 5H0z" fill="#666"/></svg></div>
        <div class="vs-gap-l"></div>
        <div class="vs-thumb vs-thumb-l"></div>
        <div class="vs-btn d-flex align-items-center justify-content-center"><svg width="9" height="5" viewBox="0 0 9 5"><path d="M0 0h9L4.500 5z" fill="#666"/></svg></div>
      </div>
    </div>

    <div class="edit-pane flex-grow-1 d-flex flex-column">
      <div class="edit-stage d-flex">
        <div class="slide-wrap">
          <div class="slide-canvas">
            <svg class="sl-art" width="1028" height="579" viewBox="0 0 1028 579"><use href="#art"/></svg>
            <div class="sl-fa sl-title" dir="rtl">رمزنگاری پیشرفته و استانداردهای امنیتی</div>
            <div class="sl-fa sl-sub" dir="rtl">اجزای کلیدی رمزنگاری</div>
            <div class="sl-fa sl-band" style="top:222px">رمزنگاری<br>پساکوانتومی</div>
            <div class="sl-lat" style="top:299px">ECC</div>
            <div class="sl-lat" style="top:363px">RSA</div>
            <div class="sl-lat" style="top:428px">AES</div>
            <div class="sl-fa sl-note" style="top:220px">روش‌های رمزنگاری که برای ایمن بودن<br>در برابر حملات کامپیوترهای کوانتومی<br>طراحی شده‌اند.</div>
            <div class="sl-fa sl-note" style="top:285px"><span class="sl-loose">روشی از رمزنگاری که امنیت بالایی را با</span><br>کلیدهای کوچکتر ارائه می‌دهد و برای<br>برنامه‌های مدرن مناسب است.</div>
            <div class="sl-fa sl-note" style="top:349px">استاندارد رمزنگاری نامتقارن که برای<br><span class="sl-tight">تبادل کلید امن و امضاهای دیجیتال استفاده</span><br>می‌شود.</div>
            <div class="sl-fa sl-note" style="top:413px">استاندارد رمزنگاری متقارن که به طور<br>گسترده برای رمزنگاری داده‌های امن<br>استفاده می‌شود.</div>
            <div class="sl-no">10</div>
          </div>
        </div>
        <div class="rsb d-flex flex-column">
          <div class="vscroll vs-right d-flex flex-column">
            <div class="vs-btn d-flex align-items-center justify-content-center"><svg width="9" height="5" viewBox="0 0 9 5"><path d="M4.500 0l4.500 5H0z" fill="#666"/></svg></div>
            <div class="vs-gap-r"></div>
            <div class="vs-thumb vs-thumb-r"></div>
            <div class="vs-fill"></div>
            <div class="vs-btn d-flex align-items-center justify-content-center"><svg width="9" height="5" viewBox="0 0 9 5"><path d="M0 0h9L4.500 5z" fill="#666"/></svg></div>
          </div>
          <div class="page-nav d-flex flex-column align-items-center">
            <svg width="8" height="10" viewBox="0 0 8 10"><path d="M4 0l4 4H0zM4 5l4 4H0z" fill="#666"/></svg>
            <svg width="8" height="10" viewBox="0 0 8 10"><path d="M0 0h8L4 4zM0 5h8L4 9z" fill="#666"/></svg>
          </div>
        </div>
      </div>
      <div class="notes-pane">Click to add notes•</div>
    </div>
  </main>

  <!-- status bar -->
  <footer class="status-bar d-flex align-items-center">
    <div class="st-left d-flex align-items-center">
      <span>Slide 10 of 11</span>
      <svg class="st-note-ic" width="15" height="13" viewBox="0 0 15 13"><path d="M.5 1c2-1 4-1 6 0v11c-2-1-4-1-6 0zM6.500 1c1-.5 2-.7 3-.7M6.500 12c2-1 4-1 6 0V7" fill="none" stroke="#666"/><path d="M8 8l5-6 1 1-5 6-2 .5z" fill="#666"/></svg>
      <span class="st-lang">English (United States)</span>
    </div>
    <div class="st-right d-flex align-items-center">
      <div class="st-item d-flex align-items-center"><svg width="12" height="11" viewBox="0 0 12 11"><path d="M3 3l3-3 3 3zM0 5h12M0 7.500h12M0 10h12" fill="#666" stroke="#666" stroke-width=".7"/></svg><span>Notes</span></div>
      <div class="st-item d-flex align-items-center"><svg width="12" height="12" viewBox="0 0 12 12"><path d="M0 0h12v9H6l-2 3V9H0z" fill="#666"/></svg><span>Comments</span></div>
      <div class="st-view st-view-on d-flex align-items-center justify-content-center"><svg width="14" height="13" viewBox="0 0 14 13"><path d="M.5 .5h13v12H.5zM.5 9.500h13M3.500 .5v9M6 3.500h5v3H6z" fill="none" stroke="#666"/></svg></div>
      <div class="st-view d-flex align-items-center justify-content-center"><svg width="14" height="12" viewBox="0 0 14 12"><path d="M.5 .5h5v4h-5zM8.500 .5h5v4h-5zM.5 7.500h5v4h-5zM8.500 7.500h5v4h-5z" fill="none" stroke="#666"/></svg></div>
      <div class="st-view d-flex align-items-center justify-content-center"><svg width="13" height="12" viewBox="0 0 13 12"><path d="M6.500 1.500C5 .5 3 .5.500.5v10c2.500 0 4.500 0 6 1 1.500-1 3.500-1 6-1V.5c-2.500 0-4.500 0-6 1zM6.500 1.500v10M2 3h3M2 5h3M2 7h3M8 3h3M8 5h3M8 7h3" fill="none" stroke="#666" stroke-width=".9"/></svg></div>
      <div class="st-view st-view-end d-flex align-items-center justify-content-center"><svg width="13" height="12" viewBox="0 0 13 12"><path d="M0 .5h13M1.500 .5v6h10v-6M6.500 6.500v5M4 11.500h5M1.500 2.500h10" fill="none" stroke="#666"/></svg></div>
      <svg width="7" height="2" viewBox="0 0 7 2"><path d="M0 0h7v2H0z" fill="#555"/></svg>
      <div class="zoom-bar"><div class="zoom-knob"></div><div class="zoom-tick"></div></div>
      <svg width="8" height="8" viewBox="0 0 8 8"><path d="M3 0h2v3h3v2H5v3H3V5H0V3h3z" fill="#555"/></svg>
      <span class="zoom-pct">81%</span>
      <svg class="me-2" width="12" height="13" viewBox="0 0 12 13"><path d="M.5 .5h11v12H.5zM3 3v2M3 3h2M9 3v2M9 3H7M3 10V8M3 10h2M9 10V8M9 10H7" fill="none" stroke="#666"/></svg>
    </div>
  </footer>
</body>
</html>
